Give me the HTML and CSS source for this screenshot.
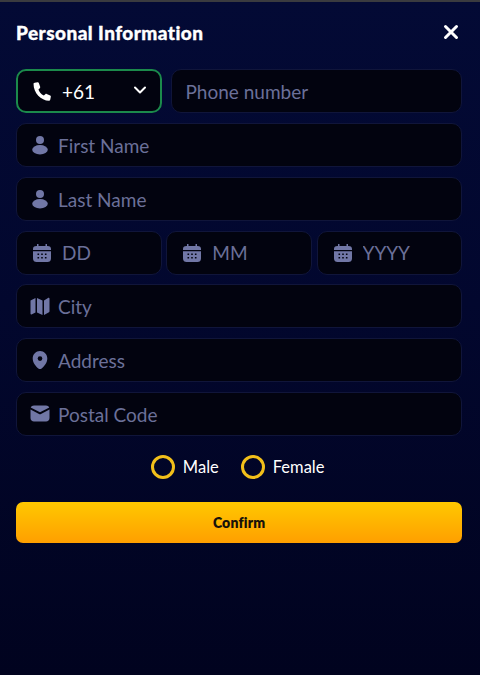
FILE: index.html
```html
<!DOCTYPE html>
<html lang="en">
<head>
<meta charset="utf-8">
<title>Personal Information</title>
<link rel="stylesheet" href="styles.css">
</head>
<body>
<div class="topline"></div>
<main class="panel">
  <header class="head">
    <h1>Personal Information</h1>
    <button class="close" aria-label="Close">
      <svg viewBox="0 0 16 16" width="16" height="16"><path d="M2.5 2.5l11 11M13.5 2.5l-11 11" stroke="#fff" stroke-width="3" stroke-linecap="round"/></svg>
    </button>
  </header>
  <form class="form">
    <div class="row phone">
      <div class="field code">
        <svg class="ico-phone" viewBox="2.500 .5 15 15.500" width="19" height="19"><path fill="#fff" d="M3.600 1.200 6 .8c.5-.1.8.2 1 .6l1.100 3c.2.400 0 .8-.3 1.100L6.700 6.600c.6 1.900 2.300 3.900 4.400 5l1.200-1.200c.3-.3.700-.4 1.100-.2l2.900 1.300c.4.200.6.600.5 1l-.5 2.500c-.1.500-.5.800-1 .8C8.800 15.700 2.600 9.300 2.700 2.100c0-.5.400-.8.900-.9z"/></svg>
        <span class="code-val">+61</span>
        <svg class="chev" viewBox="0 0 14 10" width="14" height="10"><path d="M2 2.500l5 5 5-5" fill="none" stroke="#fff" stroke-width="2" stroke-linecap="round" stroke-linejoin="round"/></svg>
      </div>
      <label class="field"><input class="plain" placeholder="Phone number"></label>
    </div>
    <label class="field">
      <svg class="ico" viewBox="0 0 18 20" width="18" height="20"><circle cx="9" cy="5" r="4"/><ellipse cx="9" cy="14.800" rx="7.800" ry="4.700"/></svg>
      <input placeholder="First Name">
    </label>
    <label class="field">
      <svg class="ico" viewBox="0 0 18 20" width="18" height="20"><circle cx="9" cy="5" r="4"/><ellipse cx="9" cy="14.800" rx="7.800" ry="4.700"/></svg>
      <input placeholder="Last Name">
    </label>
    <div class="row date">
      <label class="field">
        <svg class="ico cal" viewBox="0 0 20 20" width="20" height="20"><use href="#cal"/></svg>
        <input placeholder="DD">
      </label>
      <label class="field">
        <svg class="ico cal" viewBox="0 0 20 20" width="20" height="20"><use href="#cal"/></svg>
        <input placeholder="MM">
      </label>
      <label class="field">
        <svg class="ico cal" viewBox="0 0 20 20" width="20" height="20"><use href="#cal"/></svg>
        <input placeholder="YYYY">
      </label>
    </div>
    <label class="field">
      <svg class="ico wide" viewBox="0 0 20 20" width="20" height="20"><path d="M0.500 4.500 5.500 2v14.500l-4 2c-.5.200-1-.1-1-.7zM7 2l5.500 2.500V19L7 16.500zM14 4.500 18 2c.7-.4 1.500 0 1.500.8v12.500c0 .4-.2.700-.5.900L14 19z"/></svg>
      <input placeholder="City">
    </label>
    <label class="field">
      <svg class="ico" viewBox="0 0 18 20" width="18" height="20"><path d="M9 1c4 0 7.300 3.300 7.300 7.600 0 4.200-3.500 8.600-6 10.100-.8.500-1.800.5-2.600 0-2.500-1.500-6-5.900-6-10.100C1.700 4.300 5 1 9 1z"/><circle cx="9" cy="8.600" r="2.300" fill="#02030f"/></svg>
      <input placeholder="Address">
    </label>
    <label class="field">
      <svg class="ico wide" viewBox="0 0 20 18" width="20" height="18"><path d="M4 .5h12c1.500 0 2.800.8 3.300 2.100L10 7.300.7 2.600C1.200 1.300 2.500.5 4 .5zM.5 4.500l9 4.700c.3.200.7.200 1 0l9-4.700v8.500c0 2-1.500 3.500-3.500 3.500H4C2 16.500.5 15 .5 13z"/></svg>
      <input placeholder="Postal Code">
    </label>
    <div class="gender">
      <label class="radio"><span class="ring"></span>Male</label>
      <label class="radio"><span class="ring"></span>Female</label>
    </div>
    <button type="button" class="confirm">Confirm</button>
  </form>
</main>
<svg class="defs" width="0" height="0" aria-hidden="true">
  <symbol id="cal" viewBox="0 0 20 20">
    <path fill-rule="evenodd" d="M5 1h1.500v2h7V1H15v2h.5C18 3 19 4 19 6v1H1V6c0-2 1-3 3.500-3H5zM1 8.200h18v7.300c0 2.500-1.500 3.500-3.500 3.500h-11C2.500 19 1 18 1 15.500zM5.500 10.500v1.500h1.600v-1.500zm3.700 0v1.500h1.600v-1.500zm3.700 0v1.500h1.600v-1.500zM5.500 14v1.500h1.600V14zm3.700 0v1.500h1.600V14zm3.700 0v1.500h1.600V14z"/>
  </symbol>
</svg>
</body>
</html>
```
FILE: styles.css
```css
* { box-sizing: border-box; }
html, body { margin: 0; height: 100%; }
body {
  width: 480px;
  height: 675px;
  overflow: hidden;
  font-family: "Lato", "Open Sans", sans-serif;
  background: linear-gradient(180deg, #030a35 0%, #02072e 45%, #01031f 100%);
}
.topline { height: 2px; background: #3a3b3f; }
.panel { padding: 0 17.700px 0 16px; }
.head {
  height: 67px;
  display: flex;
  align-items: flex-start;
  justify-content: space-between;
  padding-top: 20px;
}
.head h1 {
  margin: 0;
  color: #fff;
  font-size: 19px;
  line-height: 22px;
  font-weight: 900;
  letter-spacing: 0.45px;
  -webkit-text-stroke: 0.35px #fff;
}
.close {
  background: none;
  border: 0;
  padding: 0;
  margin: 2px 3px 0 0;
  width: 16px;
  height: 16px;
  display: flex;
}
.form { display: flex; flex-direction: column; gap: 9.85px; }
.row { display: flex; }
.phone { gap: 8.500px; }
.phone .code { flex: 0 0 146px; }
.phone .field:last-child { flex: 1; }
.date { gap: 4.500px; }
.date .field { flex: 1; min-width: 0; padding-left: 15px; }
.date input { padding-top: 0; }
.field {
  height: 44px;
  display: flex;
  align-items: center;
  gap: 9px;
  padding: 0 14px;
  border-radius: 10px;
  background: #02030f;
  border: 1px solid #10153a;
}
.code {
  border: 2px solid #1b8a4b;
  padding: 0 13px 0 15px;
  border-radius: 10px;
  gap: 0;
}
.ico-phone { flex: none; }
.code-val { color: #fff; font-size: 19px; margin-left: 10px; flex: 1; padding-top: 1px; }
.chev { flex: none; margin-top: -2px; }
.ico { flex: none; fill: #7177a6; }
.wide { margin-left: -1px; margin-right: -1px; }
.cal { margin-right: 1px; }
input {
  flex: 1;
  min-width: 0;
  width: 100%;
  background: none;
  border: 0;
  outline: 0;
  padding: 1px 0 0;
  font: 400 19px "Lato", "Open Sans", sans-serif;
  color: #fff;
}
input::placeholder { color: #6b7099; opacity: 1; }
.gender {
  display: flex;
  justify-content: center;
  gap: 22px;
  margin-top: 9px;
  height: 24px;
  padding-right: 3px;
}
.radio {
  display: flex;
  align-items: center;
  gap: 8px;
  color: #fff;
  font-size: 16.500px;
  padding-top: 1px;
}
.ring {
  width: 24px;
  height: 24px;
  border-radius: 50%;
  border: 3px solid #f2bf1a;
}
.confirm {
  margin-top: 13px;
  height: 41px;
  border: 0;
  border-radius: 7px;
  background: linear-gradient(180deg, #ffc800 0%, #ff9f00 100%);
  color: #17120a;
  font: 800 14px "Lato", sans-serif;
  letter-spacing: 0.2px;
  padding-top: 1px;
}
.defs { position: absolute; }
```
